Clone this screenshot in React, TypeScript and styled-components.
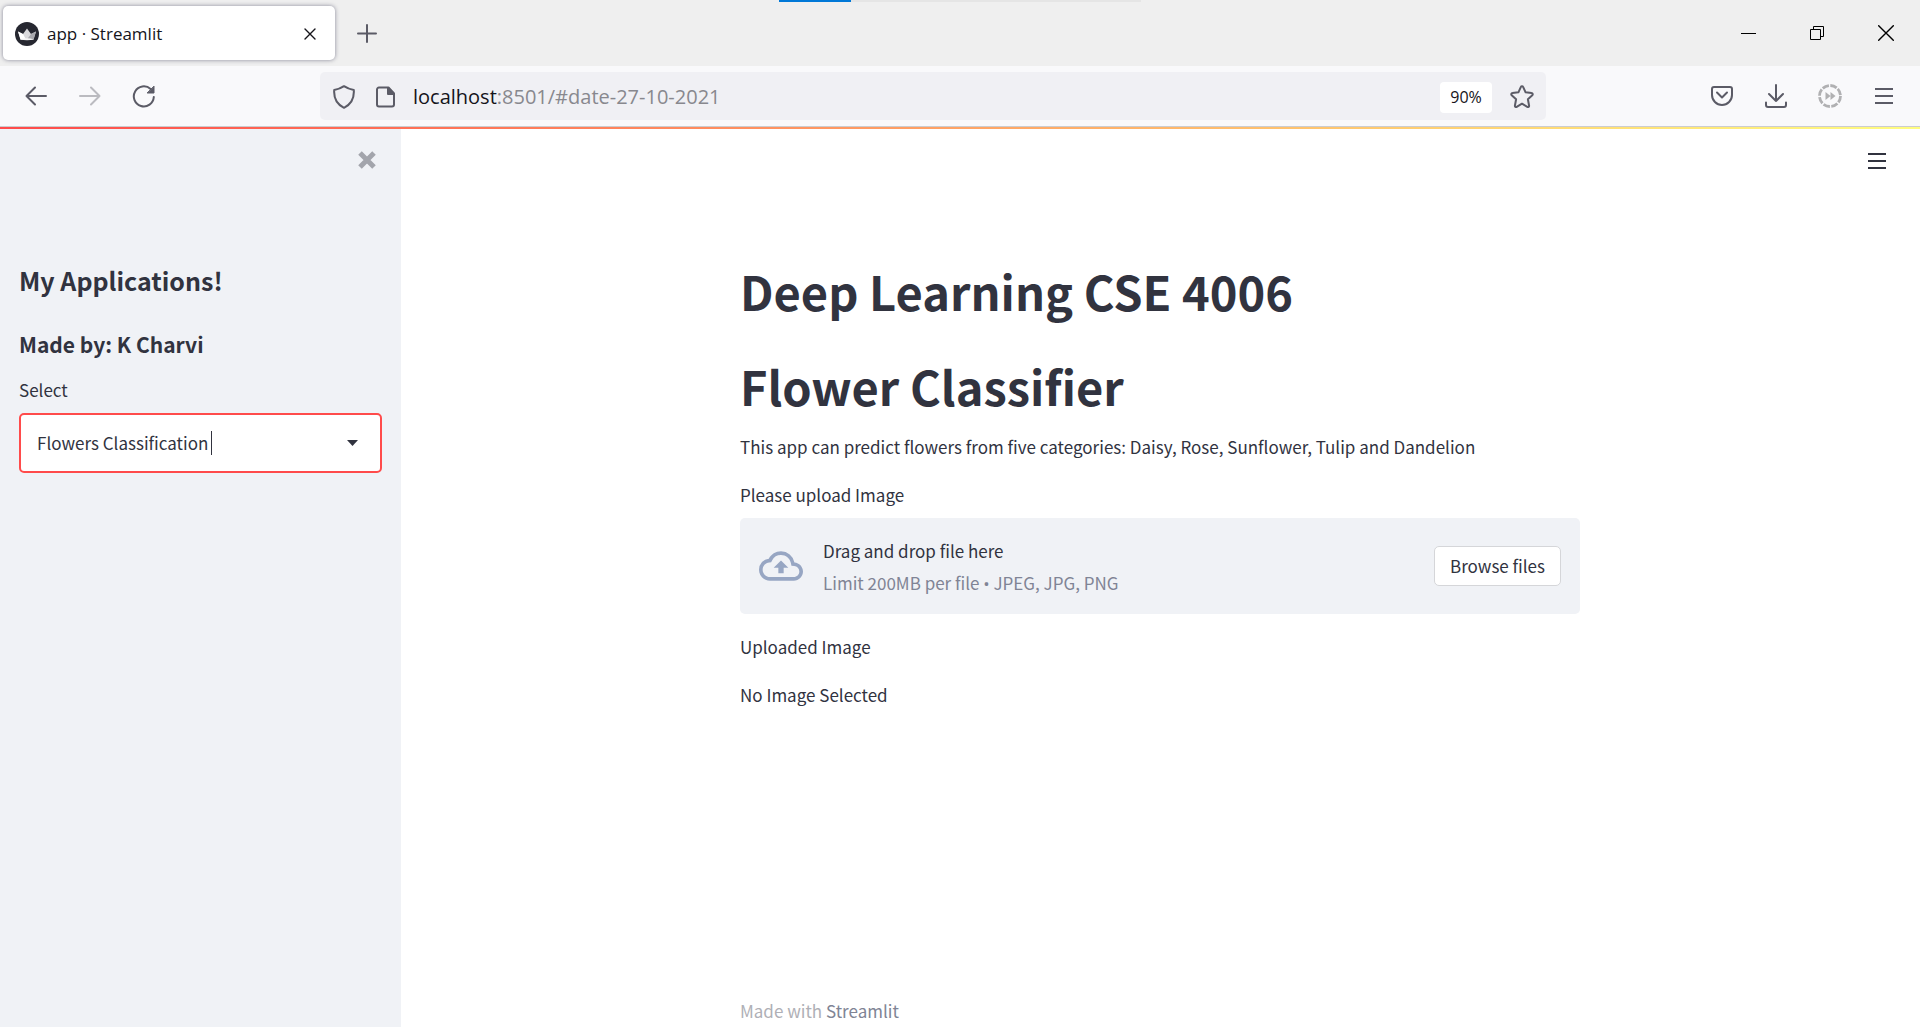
import React from "react";
import styled, { createGlobalStyle } from "styled-components";

const ink = "#31333f";
const chromeInk = "#5b5b66";
const chromeFont = `"Open Sans", "Noto Sans", sans-serif`;
const appFont = `"Source Sans Pro", "Noto Sans CJK SC", "Open Sans", sans-serif`;

const GlobalStyle = createGlobalStyle`
  *, *::before, *::after { box-sizing: border-box; }
  body { margin: 0; background: #fff; }
  h1, h2, h3, p { margin: 0; }
  button, input, select { font: inherit; color: inherit; }
  svg { display: block; flex: none; }
`;

const Window = styled.div`
  display: flex;
  flex-direction: column;
  min-height: 100vh;
`;

/* ---------- browser chrome ---------- */

const TabStrip = styled.header`
  position: relative;
  display: flex;
  align-items: center;
  height: 66px;
  padding-left: 3px;
  background: #efefef;
  font-family: ${chromeFont};
`;

const CaptureBar = styled.div`
  position: absolute;
  top: 0;
  left: 50%;
  width: 362px;
  height: 2px;
  transform: translateX(-50%);
  background: linear-gradient(to right, #0078d7 72px, #e5e5e5 72px);
`;

const Tab = styled.div`
  display: flex;
  align-items: center;
  gap: 8px;
  width: 332px;
  height: 54px;
  padding: 1px 8px 0 12px;
  border-radius: 5px;
  background: #fff;
  box-shadow: 0 0 4px rgba(80, 80, 105, 0.65);
`;

const TabTitle = styled.span`
  flex: 1;
  font-size: 17px;
  line-height: 24px;
  color: #15141a;
`;

const IconButton = styled.button<{ $w: number; $h?: number; $color?: string }>`
  display: flex;
  align-items: center;
  justify-content: center;
  width: ${(p) => p.$w}px;
  height: ${(p) => p.$h ?? 40}px;
  padding: 0;
  border: 0;
  background: none;
  color: ${(p) => p.$color ?? chromeInk};
`;

const WindowControls = styled.div`
  display: flex;
  margin-left: auto;
`;

const Toolbar = styled.nav`
  display: flex;
  align-items: center;
  height: 61px;
  padding: 0 9px;
  border-bottom: 1px solid #cccccf;
  background: #f9f9fb;
  font-family: ${chromeFont};
`;

const Spring = styled.div`
  flex: 0 1 149px;
`;

const AddressBar = styled.div`
  display: flex;
  flex: 1;
  align-items: center;
  height: 48px;
  padding: 2px 4px 0;
  border-radius: 5px;
  background: #f0f0f4;
  font-size: 20px;
  line-height: 28px;
`;

const Host = styled.label`
  padding-left: 5px;
  color: #15141a;
`;

const AddressInput = styled.input`
  flex: 1;
  min-width: 0;
  padding: 0;
  border: 0;
  outline: 0;
  background: none;
  color: #88888e;
`;

const ZoomButton = styled.button`
  width: 52px;
  height: 31px;
  margin-right: 10px;
  padding: 0;
  border: 0;
  border-radius: 4px;
  background: #fff;
  color: #15141a;
  font-size: 16px;
  line-height: 24px;
`;

/* ---------- page ---------- */

const Decoration = styled.div`
  height: 2px;
  background: linear-gradient(to right, #ff4b4b, #fffd80);
`;

const Page = styled.div`
  display: flex;
  flex: 1;
  color: ${ink};
  font-family: ${appFont};
  font-size: 17px;
  line-height: 32px;
`;

const Sidebar = styled.aside`
  flex: none;
  width: 401px;
  padding: 11px 19px 0;
  background: #f0f2f6;
`;

const CloseRow = styled.div`
  display: flex;
  justify-content: flex-end;
  height: 120px;
`;

const SidebarTitle = styled.h2`
  font-size: 25px;
  line-height: 40px;
  font-weight: 600;
`;

const SidebarSubtitle = styled.h3`
  padding: 25px 0 11px;
  font-size: 21px;
  line-height: 38px;
  font-weight: 600;
`;

const SelectLabel = styled.label`
  display: block;
  padding-bottom: 7px;
`;

const SelectField = styled.div`
  display: flex;
  align-items: center;
  height: 60px;
  padding: 0 16px;
  border: 2px solid #ff4b4b;
  border-radius: 5px;
  background: #fff;
`;

const Select = styled.select`
  height: 32px;
  padding: 0;
  border: 0;
  outline: 0;
  background: none;
  appearance: none;
`;

const TextCaret = styled.span`
  width: 1px;
  height: 24px;
  margin-left: 2px;
  background: ${ink};
`;

const FieldArrow = styled.span`
  margin-left: auto;
  padding-right: 6px;
`;

const Main = styled.main`
  display: flex;
  flex: 1;
  flex-direction: column;
  min-width: 0;
  padding-right: 1px;
`;

const MenuRow = styled.div`
  display: flex;
  justify-content: flex-end;
  height: 112px;
  padding: 12px 22px 0 0;
`;

const Column = styled.div`
  width: 100%;
  max-width: 840px;
  margin: 0 auto;
`;

const Title = styled.h1`
  padding: 20px 0 15px;
  font-size: 47px;
  line-height: 60px;
  font-weight: 700;
`;

const Paragraph = styled.p`
  margin-bottom: 16px;
`;

const UploadLabel = styled.label`
  display: block;
  padding-bottom: 7px;
`;

const DropZone = styled.section`
  display: flex;
  align-items: center;
  height: 96px;
  margin-bottom: 17px;
  padding: 0 19px;
  border-radius: 5px;
  background: #f0f2f6;
`;

const DropText = styled.div`
  display: flex;
  flex: 1;
  flex-direction: column;
  padding: 2px 0 0 20px;
`;

const Muted = styled.span`
  color: #808495;
`;

const Bullet = styled.span`
  font-family: "Open Sans", sans-serif;
`;

const BrowseButton = styled.button`
  height: 40px;
  padding: 0 15px;
  border: 1px solid #d5d6d9;
  border-radius: 5px;
  background: #fff;
  line-height: 28px;
`;

const HiddenFile = styled.input`
  display: none;
`;

const Footer = styled.footer`
  width: 100%;
  max-width: 840px;
  margin: auto auto 0;
  color: #afb0b6;
`;

const FooterLink = styled.a`
  color: #808495;
  text-decoration: none;
`;

/* ---------- icons ---------- */

type LineProps = { size: number; width?: number; children: React.ReactNode };

const Line = ({ size, width = 2, children }: LineProps) => (
  <svg
    width={size}
    height={size}
    viewBox={`0 0 ${size} ${size}`}
    fill="none"
    stroke="currentColor"
    strokeWidth={width}
    strokeLinecap="round"
    strokeLinejoin="round"
    aria-hidden="true"
  >
    {children}
  </svg>
);

const Favicon = () => (
  <svg width="24" height="24" viewBox="0 0 24 24" aria-hidden="true">
    <circle cx="12" cy="12" r="12" fill="#262730" />
    <path d="M3 9.5l5 2.5L12 6.500l4 5.500 5-2.500-2.500 8H5.500z" fill="#d9d9dc" />
    <path d="M3 9.500l5 2.500 3 5.500H5.500z" fill="#fff" />
    <path d="M21 9.500l-5 2.500-4 5.500h6.500z" fill="#a9a9ae" />
    <path d="M5 17.500q7-2.400 14 0-7 1.400-14 0z" fill="#f4f4f5" />
  </svg>
);

const Burger = ({ color }: { color: string }) => (
  <svg width="18" height="16" viewBox="0 0 18 16" fill={color} aria-hidden="true">
    <path d="M0 0h18v2H0zM0 7h18v2H0zM0 14h18v2H0z" />
  </svg>
);

export default function App() {
  return (
    <Window>
      <GlobalStyle />
      <TabStrip>
        <CaptureBar />
        <Tab>
          <Favicon />
          <TabTitle>app · Streamlit</TabTitle>
          <IconButton $w={34} $color="#15141a" aria-label="Close tab">
            <Line size={12} width={1.4}>
              <path d="M1 1l10 10M11 1L1 11" />
            </Line>
          </IconButton>
        </Tab>
        <IconButton $w={64} aria-label="New tab">
          <Line size={20}>
            <path d="M10 2v17M1 10.500h18" />
          </Line>
        </IconButton>
        <WindowControls>
          <IconButton $w={69} $color="#000" aria-label="Minimize">
            <svg width="15" height="1" aria-hidden="true">
              <path d="M0 0h15v1H0z" />
            </svg>
          </IconButton>
          <IconButton $w={68} $color="#000" aria-label="Restore">
            <svg width="14" height="14" viewBox="0 0 14 14" fill="none" stroke="#000" aria-hidden="true">
              <path d="M.5 3.500h10v10H.5zM3.500 3.500v-3h10v10h-3" />
            </svg>
          </IconButton>
          <IconButton $w={69} $color="#000" aria-label="Close window">
            <Line size={16} width={1.4}>
              <path d="M.7.7l14.600 14.600M15.300.7L.7 15.300" />
            </Line>
          </IconButton>
        </WindowControls>
      </TabStrip>

      <Toolbar>
        <IconButton $w={54} aria-label="Back">
          <Line size={22}>
            <path d="M21 11H1.500M10 2.500L1.500 11l8.500 8.500" />
          </Line>
        </IconButton>
        <IconButton $w={54} $color="#bbbbc0" aria-label="Forward">
          <Line size={22}>
            <path d="M1 11h19.500M12 2.500l8.500 8.500-8.500 8.500" />
          </Line>
        </IconButton>
        <IconButton $w={54} aria-label="Reload">
          <Line size={24}>
            <path d="M21.800 13a10 10 0 1 1-3.200-8" />
            <path d="M22 2.500v6.500h-6.500z" fill="currentColor" strokeWidth={1} />
          </Line>
        </IconButton>
        <Spring />
        <AddressBar>
          <IconButton $w={40} aria-label="Tracking protection">
            <Line size={24}>
              <path d="M12 1.200c3 2 6.200 3.200 9.800 3.900.5 7.400-2.300 14-9.800 17.700C4.500 19.100 1.700 12.500 2.200 5.100 5.800 4.400 9 3.200 12 1.200z" />
            </Line>
          </IconButton>
          <IconButton $w={44} aria-label="Site information">
            <Line size={22}>
              <path d="M4 1.500h9.500l5.500 6v11a2 2 0 0 1-2 2H4a2 2 0 0 1-2-2v-15a2 2 0 0 1 2-2z" />
              <path d="M13 2v6h6z" fill="currentColor" />
            </Line>
          </IconButton>
          <Host htmlFor="address">localhost</Host>
          <AddressInput id="address" defaultValue=":8501/#date-27-10-2021" />
          <ZoomButton>90%</ZoomButton>
          <IconButton $w={40} aria-label="Bookmark this page">
            <Line size={24}>
              <path d="M10.900 1.900a1.200 1.200 0 0 1 2.200 0l2.500 5.400 6 .8a1.200 1.200 0 0 1 .7 2.100l-4.400 4 1.200 6.500a1.200 1.200 0 0 1-1.800 1.200L12 18.700l-5.300 3.200a1.200 1.200 0 0 1-1.800-1.200l1.200-6.500-4.400-4a1.200 1.200 0 0 1 .7-2.100l6-.8z" />
            </Line>
          </IconButton>
        </AddressBar>
        <Spring />
        <IconButton $w={54} aria-label="Save to Pocket">
          <Line size={22}>
            <path d="M3 2h16a2 2 0 0 1 2 2v6a10 10 0 0 1-20 0V4a2 2 0 0 1 2-2z" />
            <path d="M6 7.500l5 5 5-5" />
          </Line>
        </IconButton>
        <IconButton $w={54} aria-label="Downloads">
          <Line size={24}>
            <path d="M12 1v16M5 10l7 7 7-7M2 18.500V21a2 2 0 0 0 2 2h16a2 2 0 0 0 2-2v-2.500" />
          </Line>
        </IconButton>
        <IconButton $w={54} $color="#b0b0b2" aria-label="Extension">
          <svg width="24" height="24" viewBox="0 0 24 24" fill="none" stroke="currentColor" aria-hidden="true">
            <circle cx="12" cy="12" r="10.500" strokeWidth="2.800" strokeDasharray="6.800 1.450" />
            <path d="M7.500 8l5 4-5 4zM12.500 8l5 4-5 4z" fill="currentColor" stroke="none" />
          </svg>
        </IconButton>
        <IconButton $w={54} aria-label="Application menu">
          <Burger color={chromeInk} />
        </IconButton>
      </Toolbar>

      <Decoration />
      <Page>
        <Sidebar>
          <CloseRow>
            <IconButton $w={30} $color="#a3a5ac" aria-label="Close sidebar">
              <svg width="18" height="18" viewBox="0 0 18 18" stroke="currentColor" strokeWidth="5" aria-hidden="true">
                <path d="M2 2l14 14M16 2L2 16" />
              </svg>
            </IconButton>
          </CloseRow>
          <SidebarTitle>My Applications!</SidebarTitle>
          <SidebarSubtitle>Made by: K Charvi</SidebarSubtitle>
          <SelectLabel htmlFor="application">Select</SelectLabel>
          <SelectField>
            <Select id="application">
              <option>Flowers Classification</option>
            </Select>
            <TextCaret />
            <FieldArrow>
              <svg width="11" height="6" viewBox="0 0 11 6" fill={ink} aria-hidden="true">
                <path d="M0 0h11L5.500 6z" />
              </svg>
            </FieldArrow>
          </SelectField>
        </Sidebar>

        <Main>
          <MenuRow>
            <IconButton $w={40} aria-label="Main menu">
              <Burger color={ink} />
            </IconButton>
          </MenuRow>
          <Column>
            <Title>Deep Learning CSE 4006</Title>
            <Title>Flower Classifier</Title>
            <Paragraph>
              This app can predict flowers from five categories: Daisy, Rose, Sunflower, Tulip and Dandelion
            </Paragraph>
            <UploadLabel htmlFor="upload">Please upload Image</UploadLabel>
            <DropZone>
              <svg width="44" height="44" viewBox="0 0 24 24" fill="#97a6c3" aria-hidden="true">
                <path d="M19.350 10.040A7.490 7.490 0 0 0 12 4C9.110 4 6.600 5.640 5.350 8.040A5.994 5.994 0 0 0 0 14c0 3.310 2.690 6 6 6h13c2.760 0 5-2.240 5-5 0-2.640-2.050-4.780-4.650-4.960zM19 18H6c-2.210 0-4-1.790-4-4 0-2.050 1.530-3.760 3.560-3.970l1.070-.11.5-.95A5.469 5.469 0 0 1 12 6c2.620 0 4.880 1.860 5.390 4.430l.3 1.500 1.530.11A2.980 2.980 0 0 1 22 15c0 1.650-1.350 3-3 3zM8 13h2.550v3h2.900v-3H16l-4-4z" />
              </svg>
              <DropText>
                <span>Drag and drop file here</span>
                <Muted>
                  Limit 200MB per file <Bullet>•</Bullet> JPEG, JPG, PNG
                </Muted>
              </DropText>
              <HiddenFile id="upload" type="file" accept=".jpeg,.jpg,.png" />
              <BrowseButton>Browse files</BrowseButton>
            </DropZone>
            <Paragraph>Uploaded Image</Paragraph>
            <Paragraph>No Image Selected</Paragraph>
          </Column>
          <Footer>
            Made with <FooterLink href="#">Streamlit</FooterLink>
          </Footer>
        </Main>
      </Page>
    </Window>
  );
}
